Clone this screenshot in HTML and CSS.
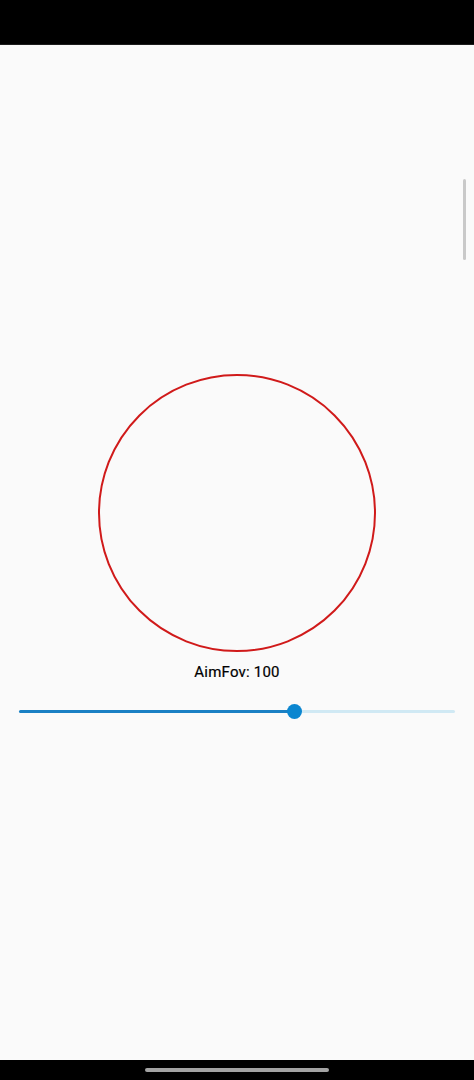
FILE: index.html
```html
<!DOCTYPE html>
<html lang="en">
<head>
  <meta charset="UTF-8" />
  <title>AimFov</title>
  <meta name="viewport" content="width=device-width, initial-scale=1" />
  <link rel="stylesheet" href="styles.css">
</head>
<body>
  <div class="status-bar"></div>

  <main class="screen">
    <div class="fov-circle" aria-hidden="true"></div>
    <p class="fov-label">AimFov: 100</p>
    <div class="slider" role="slider" aria-valuemin="0" aria-valuemax="158" aria-valuenow="100">
      <div class="slider-track">
        <div class="slider-active" style="width: 63.3%"></div>
        <div class="slider-thumb" style="left: 63.3%"></div>
      </div>
    </div>
    <div class="scroll-thumb"></div>
  </main>

  <div class="nav-bar">
    <div class="home-pill"></div>
  </div>
</body>
</html>
```

FILE: styles.css
```css
html, body {
  margin: 0;
  padding: 0;
}
body {
  background: #fafafa;
  font-family: Roboto, "Noto Sans", sans-serif;
  color: #000;
  height: 1080px;
  display: flex;
  flex-direction: column;
  overflow: hidden;
}
.status-bar {
  height: 45px;
  background: #000;
  border-bottom: 1px solid #1c1c1c;
  box-sizing: border-box;
}
.screen {
  position: relative;
  flex: 1;
  display: flex;
  flex-direction: column;
  align-items: center;
  justify-content: center;
  padding-top: 4px;
  box-sizing: border-box;
}
.fov-circle {
  width: 278px;
  height: 278px;
  border: 2px solid #d01a1a;
  border-radius: 50%;
  box-sizing: border-box;
  margin-left: -1px;
}
.fov-label {
  margin: 10px 0 0;
  height: 20px;
  line-height: 20px;
  font-size: 15px;
  letter-spacing: 0.2px;
  -webkit-text-stroke: 0.2px #000;
}
.slider {
  margin-top: 5px;
  height: 48px;
  width: 100%;
  padding: 0 19px;
  box-sizing: border-box;
  display: flex;
  align-items: center;
}
.slider-track {
  position: relative;
  flex: 1;
  height: 3px;
  background: #d0e9f4;
  border-radius: 2px;
}
.slider-active {
  height: 100%;
  background: #1a80c4;
  border-radius: 2px;
}
.slider-thumb {
  position: absolute;
  top: 50%;
  width: 15px;
  height: 15px;
  margin: -7.5px 0 0 -7.5px;
  border-radius: 50%;
  background: #0b86d0;
}
.scroll-thumb {
  position: absolute;
  right: 8px;
  top: 134px;
  width: 3px;
  height: 81px;
  border-radius: 2px;
  background: #c9c9c9;
}
.nav-bar {
  height: 20px;
  background: #000;
  display: flex;
  justify-content: center;
  align-items: center;
}
.home-pill {
  width: 184px;
  height: 4px;
  border-radius: 2px;
  background: #a3a3a3;
}
```
